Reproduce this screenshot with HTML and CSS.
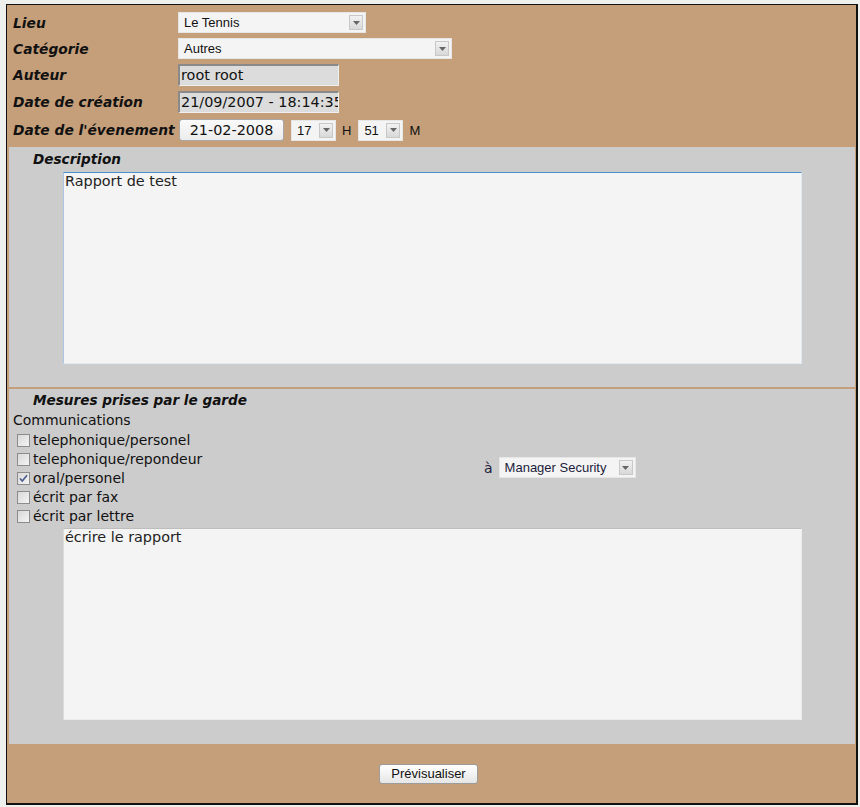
FILE: index.html
```html
<!doctype html>
<html lang="fr">
  <head>
    <meta charset="UTF-8" />
    <meta name="viewport" content="width=device-width, initial-scale=1.0" />
    <title>Rapport</title>
    <link rel="stylesheet" href="styles.css">
  </head>
  <body>
    <div class="frame">
      <div class="header">
        <div class="row">
          <span class="label">Lieu</span>
          <div class="select select-lieu">
            <span class="select-text">Le Tennis</span>
            <span class="arrow"><svg width="7" height="4" viewBox="0 0 7 4"><path d="M0 0H7L3.5 4Z" fill="#666"/></svg></span>
          </div>
        </div>
        <div class="row">
          <span class="label">Catégorie</span>
          <div class="select select-cat">
            <span class="select-text">Autres</span>
            <span class="arrow"><svg width="7" height="4" viewBox="0 0 7 4"><path d="M0 0H7L3.5 4Z" fill="#666"/></svg></span>
          </div>
        </div>
        <div class="row">
          <span class="label">Auteur</span>
          <div class="readonly">root root</div>
        </div>
        <div class="row">
          <span class="label">Date de création</span>
          <div class="readonly">21/09/2007 - 18:14:35</div>
        </div>
        <div class="row row-date">
          <span class="label">Date de l'évenement</span>
          <div class="date-line">
            <button class="date-btn" type="button">21-02-2008</button>
            <div class="select select-small">
              <span class="select-text">17</span>
              <span class="arrow"><svg width="7" height="4" viewBox="0 0 7 4"><path d="M0 0H7L3.5 4Z" fill="#666"/></svg></span>
            </div>
            <span class="unit">H</span>
            <div class="select select-small">
              <span class="select-text">51</span>
              <span class="arrow"><svg width="7" height="4" viewBox="0 0 7 4"><path d="M0 0H7L3.5 4Z" fill="#666"/></svg></span>
            </div>
            <span class="unit">M</span>
          </div>
        </div>
      </div>

      <div class="panel panel-desc">
        <h2>Description</h2>
        <textarea class="area area-desc">Rapport de test</textarea>
      </div>

      <div class="panel panel-mesures">
        <h2>Mesures prises par le garde</h2>
        <div class="comm">
          <div class="comm-list">
            <div class="comm-title">Communications</div>
            <label class="check"><span class="box"></span>telephonique/personel</label>
            <label class="check"><span class="box"></span>telephonique/repondeur</label>
            <label class="check"><span class="box"><svg width="9" height="9" viewBox="0 0 9 9"><path d="M1 4.5L3.3 7L8 1.2" fill="none" stroke="#4b5a8c" stroke-width="1.6"/></svg></span>oral/personel</label>
            <label class="check"><span class="box"></span>écrit par fax</label>
            <label class="check"><span class="box"></span>écrit par lettre</label>
          </div>
          <div class="comm-to">
            <span class="to">à</span>
            <div class="select select-to">
              <span class="select-text">Manager Security</span>
              <span class="arrow"><svg width="7" height="4" viewBox="0 0 7 4"><path d="M0 0H7L3.5 4Z" fill="#666"/></svg></span>
            </div>
          </div>
        </div>
        <textarea class="area area-mesures">écrire le rapport</textarea>
      </div>

      <div class="footer">
        <button class="preview-btn" type="button">Prévisualiser</button>
      </div>
    </div>
  </body>
</html>
```

FILE: styles.css
```css
body {
  margin: 0;
  background-color: #eef0ee;
  font-family: 'DejaVu Sans', Verdana, sans-serif;
  font-size: 14px;
  color: #111;
}

.frame {
  margin: 4px 2px 0 6px;
  width: 849px;
  height: 798px;
  background-color: #c59f7a;
  border-top: 1px solid #111;
  border-left: 1px solid #111;
  border-right: 2px solid #111;
  border-bottom: 2px solid #111;
  display: flex;
  flex-direction: column;
}

/* top block */

.header {
  padding: 7px 6px 6px 6px;
  display: flex;
  flex-direction: column;
  gap: 5px;
}

.row {
  display: flex;
  align-items: center;
  min-height: 21px;
}

.row-date {
  margin-top: 1px;
}

.label {
  width: 165px;
  font-weight: bold;
  font-style: italic;
  font-size: 13.8px;
  white-space: nowrap;
}

.select {
  position: relative;
  height: 21px;
  box-sizing: border-box;
  background-color: #f4f4f4;
  border: 1px solid #e6e6e6;
  display: flex;
  align-items: center;
  font-family: 'Liberation Sans', Arial, sans-serif;
  font-size: 13px;
}

.select-text {
  padding-left: 5px;
  flex: 1;
}

.arrow {
  width: 14px;
  height: 15px;
  margin-right: 2px;
  box-sizing: border-box;
  border: 1px solid #c8c8c8;
  background: linear-gradient(#f2f2f2, #d8d8d8);
  display: flex;
  align-items: center;
  justify-content: center;
}

.select-lieu {
  width: 188px;
}

.select-cat {
  width: 274px;
}

.select-small {
  width: 45px;
}

.select-to {
  width: 137px;
  color: #1c1c3c;
}

.readonly {
  width: 161px;
  height: 22px;
  box-sizing: border-box;
  background-color: #dcdcdc;
  border-top: 2px solid #8a8a8a;
  border-left: 2px solid #8a8a8a;
  border-right: 1px solid #f0f0f0;
  border-bottom: 1px solid #f0f0f0;
  padding-left: 1px;
  line-height: 18px;
  font-size: 14.4px;
  white-space: nowrap;
  overflow: hidden;
}

.date-line {
  display: flex;
  align-items: center;
  margin-left: -1px;
}

.date-btn {
  width: 105px;
  height: 22px;
  margin: 0 7px 0 2px;
  padding: 0;
  border: 1px solid #a8a8a8;
  border-radius: 3px;
  background: linear-gradient(#fafafa, #ececec);
  font-family: 'DejaVu Sans', Verdana, sans-serif;
  font-size: 14.4px;
  color: #111;
}

.unit {
  margin: 0 7px 0 6px;
  font-family: 'Liberation Sans', Arial, sans-serif;
  font-size: 13px;
}

/* grey panels */

.panel {
  background-color: #cccccc;
  margin: 0 1px 0 2px;
}

.panel h2 {
  margin: 0;
  padding-left: 24px;
  font-size: 13.6px;
  font-weight: bold;
  font-style: italic;
  line-height: 17px;
}

.panel-desc {
  height: 240px;
  padding-top: 4px;
  box-sizing: border-box;
}

.panel-mesures {
  margin-top: 2px;
  height: 355px;
  padding-top: 3px;
  box-sizing: border-box;
}

.area {
  display: block;
  width: 739px;
  height: 192px;
  margin: 4px 0 0 54px;
  box-sizing: border-box;
  padding: 0 1px;
  background-color: #f4f4f4;
  font-family: 'DejaVu Sans', Verdana, sans-serif;
  font-size: 14.4px;
  color: #222;
  resize: none;
  outline: none;
}

.area-desc {
  border: 1px solid #dfe9f4;
  border-top-color: #4a8fd0;
  border-left-color: #a9c6e4;
}

.area-mesures {
  margin-top: 2px;
  border: 1px solid #ececec;
  border-top-color: #bdbdbd;
  border-left-color: #dadada;
}

.comm {
  display: flex;
  padding-left: 4px;
  padding-top: 2px;
}

.comm-list {
  width: 471px;
  display: flex;
  flex-direction: column;
}

.comm-title {
  line-height: 19px;
  margin-bottom: 1px;
}

.check {
  display: flex;
  align-items: center;
  line-height: 19px;
  padding-left: 4px;
}

.box {
  width: 13px;
  height: 13px;
  box-sizing: border-box;
  border: 1px solid #8c8c8c;
  background: linear-gradient(135deg, #d8d8d8, #f4f4f4);
  margin-right: 3px;
  display: flex;
  align-items: center;
  justify-content: center;
}

.comm-to {
  display: flex;
  align-items: center;
  padding-top: 0;
  padding-bottom: 2px;
}

.to {
  margin-right: 6px;
  color: #1c1c3c;
}

/* footer */

.footer {
  flex: 1;
  display: flex;
  align-items: center;
  justify-content: center;
  padding-right: 6px;
}

.preview-btn {
  width: 99px;
  height: 20px;
  padding: 0;
  border: 1px solid #9c9c9c;
  border-radius: 3px;
  background: linear-gradient(#ffffff, #e6e6e6);
  font-family: 'Liberation Sans', Arial, sans-serif;
  font-size: 13px;
  color: #111;
}
```
